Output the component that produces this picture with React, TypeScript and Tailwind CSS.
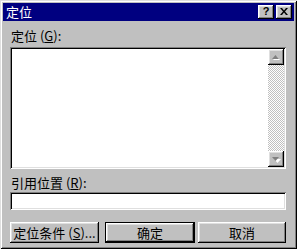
import React from "react";

// Win95 style 3D borders
const raised =
  "shadow-[inset_-1px_-1px_#000,inset_1px_1px_#fff,inset_-2px_-2px_#808080,inset_2px_2px_#dfdfdf]";
const sunken =
  "shadow-[inset_1px_1px_#808080,inset_-1px_-1px_#fff,inset_2px_2px_#000,inset_-2px_-2px_#dfdfdf]";

const font = "font-['SimSun','Noto_Sans_CJK_SC',sans-serif] text-[12px] leading-[14px]";

function Arrow({ down }: { down?: boolean }) {
  return (
    <svg width="16" height="16" viewBox="0 0 16 16" className="block">
      {down ? (
        <>
          <path d="M5 7h7l-3.5 4z" fill="#fff" transform="translate(1 1)" />
          <path d="M4 6h7l-3.5 4z" fill="#808080" />
        </>
      ) : (
        <>
          <path d="M4 10h7l-3.5-4z" fill="#fff" transform="translate(1 1)" />
          <path d="M4 10h7l-3.5-4z" fill="#808080" />
        </>
      )}
    </svg>
  );
}

function Button({
  children,
  isDefault,
  className = "",
}: {
  children: React.ReactNode;
  isDefault?: boolean;
  className?: string;
}) {
  if (isDefault) {
    return (
      <div className={`border border-black ${className}`}>
        <div className={`h-full flex items-center justify-center bg-[#c0c0c0] ${raised}`}>
          {children}
        </div>
      </div>
    );
  }
  return (
    <div className={`flex items-center justify-center bg-[#c0c0c0] ${raised} ${className}`}>
      {children}
    </div>
  );
}

export default function App() {
  return (
    <div
      className={`w-[297px] h-[249px] overflow-hidden bg-[#c0c0c0] p-[3px] text-black ${font} shadow-[inset_1px_1px_#dfdfdf,inset_-1px_-1px_#000,inset_2px_2px_#fff,inset_-2px_-2px_#808080]`}
    >
      {/* Title bar */}
      <div className="h-[18px] bg-[#000080] flex items-center pl-[3px] pr-[2px]">
        <span className="text-white flex-1 text-[13px]">定位</span>
        <div className={`w-[16px] h-[14px] bg-[#c0c0c0] ${raised} flex items-center justify-center`}>
          <span className="font-['Liberation_Sans',sans-serif] font-bold text-[11px] leading-none mt-[-1px]">?</span>
        </div>
        <div className={`w-[16px] h-[14px] ml-[2px] bg-[#c0c0c0] ${raised} flex items-center justify-center`}>
          <svg width="8" height="7" viewBox="0 0 8 7" className="block mt-[-1px]">
            <path d="M0 0h2l2 2.5L6 0h2L5 3.5 8 7H6L4 4.5 2 7H0l3-3.5z" fill="#000" />
          </svg>
        </div>
      </div>

      <div className="pl-[7px] pr-[8px]">
        <div className="mt-[8px] h-[14px] pl-[1px] text-[13px]">
          定位 (<span className="underline">G</span>):
        </div>

        {/* List box */}
        <div className={`mt-[4px] h-[122px] bg-white p-[2px] flex justify-end ${sunken}`}>
          <div className="w-[16px] h-full flex flex-col bg-[repeating-conic-gradient(#c0c0c0_0_25%,#fff_0_50%)] bg-[length:2px_2px]">
            <div className={`h-[16px] bg-[#c0c0c0] ${raised}`}>
              <Arrow />
            </div>
            <div className="flex-1" />
            <div className={`h-[16px] bg-[#c0c0c0] ${raised}`}>
              <Arrow down />
            </div>
          </div>
        </div>

        <div className="mt-[7px] h-[14px] pl-[1px] text-[13px]">
          引用位置 (<span className="underline">R</span>):
        </div>

        {/* Text box */}
        <div className={`mt-[2px] h-[18px] bg-white ${sunken}`} />

        {/* Buttons */}
        <div className="mt-[12px] flex text-[13px]">
          <Button className="w-[89px] h-[21px]">
            定位条件 (<span className="underline">S</span>)...
          </Button>
          <Button isDefault className="ml-[6px] w-[90px] h-[21px]">
            确定
          </Button>
          <Button className="ml-[3px] w-[88px] h-[21px]">取消</Button>
        </div>
      </div>
    </div>
  );
}
